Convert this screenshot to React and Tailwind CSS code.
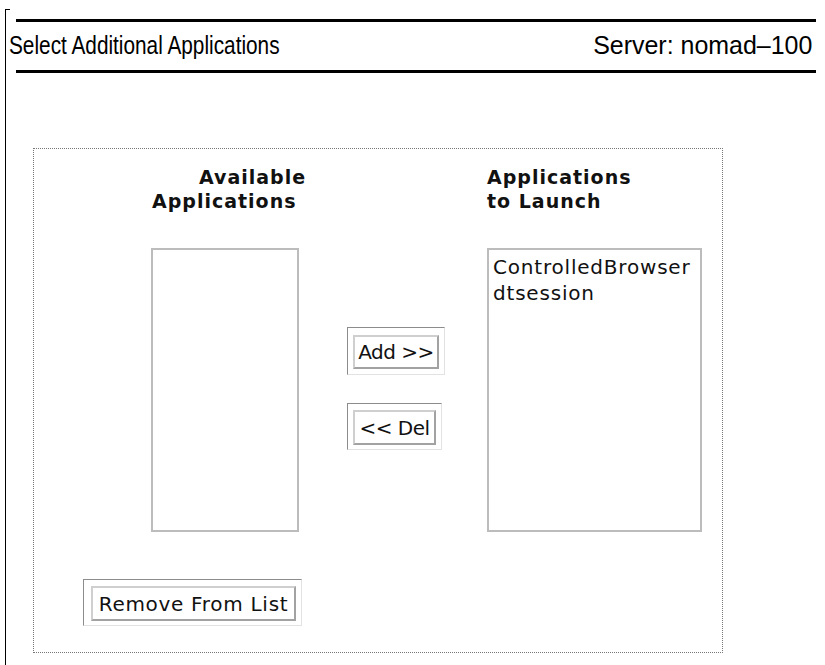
import React from "react";

function Btn({ label, outer, inner, pad, tracking }) {
  return (
    <div
      className={`${outer} ${pad} border border-t-[#8c8c8c] border-l-[#8c8c8c] border-r-[#e2e2e2] border-b-[#e2e2e2] bg-white`}
    >
      <div
        className={`${inner} border-2 border-t-[#cfcfcf] border-l-[#cfcfcf] border-r-[#a2a2a2] border-b-[#a2a2a2] flex items-center justify-center text-[20px] leading-[24px] text-[#111] ${tracking}`}
      >
        {label}
      </div>
    </div>
  );
}

export default function App() {
  return (
    <div className="w-[825px] h-[665px] bg-white pt-[9px] pl-[5px] overflow-hidden font-['DejaVu_Sans',sans-serif]">
      <div className="h-full border-l border-black flex flex-col">
        <div className="w-[4px] h-px bg-black" />
        <div className="ml-[10px] mt-[9px] w-[800px] h-[3px] bg-black" />
        <div className="w-[810px] h-[46px] flex items-center justify-between pl-[3px] pr-[4px] font-['Liberation_Sans',sans-serif] text-[26px] leading-[28px] text-black">
          <span className="inline-block whitespace-nowrap origin-left scale-x-[0.8]">
            Select Additional Applications
          </span>
          <span className="inline-block whitespace-nowrap origin-right scale-x-[0.96]">
            Server: nomad–100
          </span>
        </div>
        <div className="ml-[10px] mt-[2px] w-[800px] h-[3px] bg-black" />

        <div className="ml-[27px] mt-[75px] w-[690px] h-[505px] border border-dotted border-[#777] flex flex-col">
          {/* labels */}
          <div className="flex mt-[16px] font-bold text-[19px] leading-[24px] tracking-[1px] text-[#111]">
            <div className="ml-[117px] w-[148px] flex flex-col">
              <span className="pl-[48px] whitespace-nowrap">Available</span>
              <span className="pl-[1px] whitespace-nowrap">Applications</span>
            </div>
            <div className="ml-[188px] flex flex-col">
              <span className="whitespace-nowrap">Applications</span>
              <span className="whitespace-nowrap">to Launch</span>
            </div>
          </div>

          {/* lists + buttons */}
          <div className="flex mt-[35px]">
            <div className="ml-[117px] w-[148px] h-[284px] border-2 border-[#bcbcbc]" />
            <div className="ml-[48px] flex flex-col pt-[79px]">
              <Btn
                label="Add >>"
                outer="w-[98px] h-[48px]"
                pad="pl-[5px] pt-[7px]"
                inner="w-[86px] h-[34px]"
                tracking="tracking-[-0.5px]"
              />
              <div className="h-[28px]" />
              <Btn
                label="<< Del"
                outer="w-[95px] h-[47px]"
                pad="pl-[5px] pt-[6px]"
                inner="w-[83px] h-[35px]"
                tracking="tracking-[-0.5px]"
              />
            </div>
            <div className="ml-[42px] w-[215px] h-[284px] border-2 border-[#bcbcbc] pt-[4px] pl-[4px] text-[20px] leading-[26px] tracking-[0.8px] text-[#111]">
              <div className="whitespace-nowrap">ControlledBrowser</div>
              <div className="whitespace-nowrap">dtsession</div>
            </div>
          </div>

          {/* remove */}
          <div className="ml-[49px] mt-[47px]">
            <Btn
              label="Remove From List"
              outer="w-[219px] h-[47px]"
              pad="pl-[7px] pt-[6px]"
              inner="w-[205px] h-[35px]"
              tracking="tracking-[0.7px]"
            />
          </div>
        </div>
      </div>
    </div>
  );
}
